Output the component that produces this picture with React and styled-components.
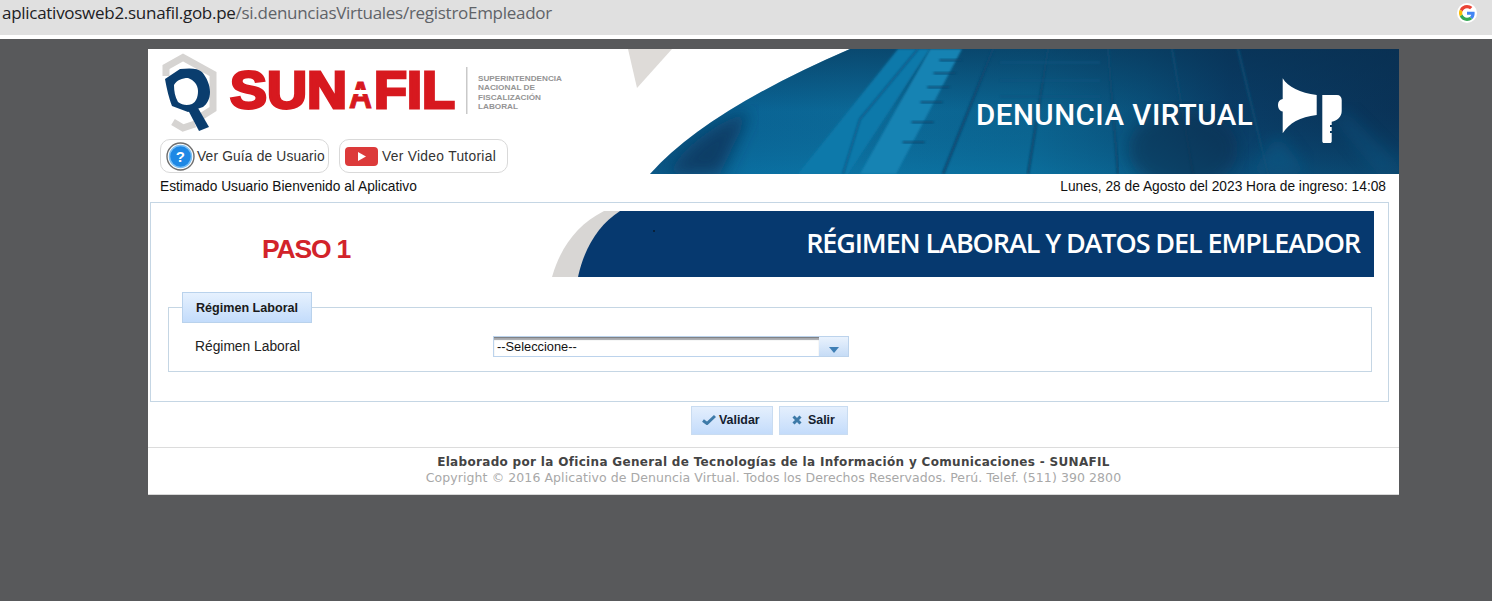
import React from "react";
import styled, { createGlobalStyle } from "styled-components";

const Global = createGlobalStyle`
  html, body { margin: 0; padding: 0; background: #58595b; }
  body { font-family: "Liberation Sans", Arial, sans-serif; overflow: hidden; }
  * { box-sizing: border-box; }
`;

const Screen = styled.div`
  width: 1492px;
  height: 601px;
  display: flex;
  flex-direction: column;
  overflow: hidden;
`;
const AddressBar = styled.div`
  height: 39px;
  flex: none;
  background: #e0e0e0;
  border-bottom: 4px solid #fff;
  padding: 0 15px 0 2px;
  display: flex;
  align-items: center;
  justify-content: space-between;
`;
const Url = styled.div`
  font-family: "Open Sans", sans-serif;
  font-size: 17px;
  letter-spacing: -0.28px;
  color: #202124;
  margin-top: -11px;
  white-space: nowrap;
`;
const UrlPath = styled.span`
  color: #5f6368;
`;
const GoogleBadge = styled.div`
  width: 20px;
  height: 20px;
  margin-top: -9px;
  border-radius: 50%;
  background: #fff;
  display: flex;
  align-items: center;
  justify-content: center;
`;
const Stage = styled.div`
  flex: 1;
  background: #58595b;
  padding: 10px 93px 0 148px;
`;
const Page = styled.div`
  width: 1251px;
  height: 446px;
  background: #fff;
  display: flex;
  flex-direction: column;
`;
const Header = styled.header`
  height: 125px;
  flex: none;
  display: flex;
  position: relative;
`;
const Brand = styled.div`
  width: 480px;
  flex: none;
  padding: 3px 0 0 12px;
  display: flex;
  flex-direction: column;
`;
const LinkRow = styled.div`
  display: flex;
  gap: 10px;
  margin-top: 5px;
`;
const LinkButton = styled.a`
  width: 169px;
  height: 34px;
  border: 1px solid #d9d9d9;
  border-radius: 10px;
  background: #fff;
  display: flex;
  align-items: center;
  gap: ${p => p.$gap}px;
  padding-left: ${p => p.$pad}px;
  font-size: 13.8px;
  letter-spacing: ${p => p.$track}px;
  color: #333;
  white-space: nowrap;
`;
const Banner = styled.div`
  flex: 1;
  position: relative;
  overflow: hidden;
`;
const BannerArt = styled.svg`
  display: block;
  width: 100%;
  height: 100%;
`;
const BannerTitle = styled.div`
  position: absolute;
  left: 348px;
  top: 51px;
  font-family: Roboto, sans-serif;
  font-size: 29.5px;
  line-height: 30px;
  font-weight: 500;
  letter-spacing: 0.5px;
  color: #fff;
  white-space: nowrap;
`;
const InfoRow = styled.div`
  height: 28px;
  flex: none;
  padding: 4px 13px 0 12px;
  display: flex;
  justify-content: space-between;
  font-size: 13.75px;
  line-height: 17px;
  color: #111;
`;
const Panel = styled.section`
  width: 1239px;
  height: 200px;
  margin-left: 2px;
  border: 1px solid #c5d6e4;
  padding: 8px 14px 0 17px;
  flex: none;
`;
const StepRow = styled.div`
  height: 66px;
  display: flex;
  position: relative;
`;
const StepLabel = styled.div`
  width: 384px;
  flex: none;
  padding: 23px 0 0 94px;
  font-size: 26.5px;
  font-weight: 700;
  letter-spacing: -1.2px;
  color: #d2232a;
`;
const StepBanner = styled.div`
  flex: 1;
  position: relative;
  overflow: hidden;
`;
const StepArt = styled.svg`
  display: block;
  width: 100%;
  height: 100%;
`;
const StepTitle = styled.div`
  position: absolute;
  right: 14px;
  top: 13px;
  font-family: "Open Sans", sans-serif;
  font-size: 27px;
  font-weight: 600;
  letter-spacing: -1.1px;
  color: #fff;
  white-space: nowrap;
`;
const Field = styled.div`
  margin-top: 30px;
  width: 1204px;
  height: 65px;
  border: 1px solid #c5d6e4;
  position: relative;
  padding: 28px 0 0 26px;
  display: flex;
  align-items: flex-start;
`;
const Legend = styled.div`
  position: absolute;
  left: 13px;
  top: -16px;
  width: 130px;
  height: 31px;
  border: 1px solid #b9d2ec;
  background: linear-gradient(#e6f1fe, #c3dcfb);
  display: flex;
  align-items: center;
  justify-content: center;
  font-size: 12.6px;
  font-weight: 700;
  color: #1a1a1a;
`;
const FieldLabel = styled.label`
  width: 298px;
  flex: none;
  margin-top: 1px;
  font-size: 13.8px;
  line-height: 20px;
  color: #222;
`;
const Select = styled.div`
  width: 356px;
  height: 21px;
  display: flex;
  border: 1px solid #bcd3ec;
`;
const SelectValue = styled.div`
  flex: 1;
  background: #fff;
  border-top: 1px solid #808286;
  box-shadow: inset 0 2px 1px #a6a8ac;
  padding: 2px 0 0 3px;
  font-size: 12.8px;
  line-height: 13px;
  color: #111;
`;
const SelectArrow = styled.div`
  width: 29px;
  flex: none;
  background: linear-gradient(#e9f2fd, #c6dcf6);
  display: flex;
  align-items: flex-end;
  justify-content: center;
  padding-bottom: 3px;
`;
const Actions = styled.div`
  height: 45px;
  flex: none;
  padding: 4px 0 0 543px;
  display: flex;
  gap: 6px;
`;
const ActionButton = styled.button`
  width: ${p => p.$w}px;
  height: 29px;
  border: 1px solid #c9dcf1;
  background: linear-gradient(#e4effd, #c4dcfb);
  padding: 0 0 2px ${p => p.$pad}px;
  display: flex;
  align-items: center;
  gap: ${p => p.$gap}px;
  font-family: "Liberation Sans", Arial, sans-serif;
  font-size: 12.4px;
  font-weight: 700;
  color: #14202e;
`;
const Footer = styled.footer`
  flex: 1;
  border-top: 1px solid #dcdcdc;
  border-bottom: 1px solid #d8d8d8;
  padding-top: 6px;
  text-align: center;
  font-family: "DejaVu Sans", Verdana, sans-serif;
  font-size: 12.5px;
  line-height: 16px;
`;
const FooterStrong = styled.div`
  font-weight: 700;
  font-size: 12px;
  letter-spacing: 0.32px;
  color: #444;
`;
const FooterMuted = styled.div`
  color: #a8a8a8;
  letter-spacing: 0.08px;
  font-size: 12.5px;
`;

const LOGO_FONT = "Liberation Sans, sans-serif";
const Logo = () => (
  <svg width="410" height="82" viewBox="0 0 410 82" role="img">
    <path d="M6 24 V15 L23 5.500 L53 22 V57 L42 64 M35 72 L23 76 L13 70" fill="none" stroke="#d6d4d2" strokeWidth="7" />
    <path fillRule="evenodd" fill="#0a3d6e" d="M5 27 L20 17 C30 16 38 16 42 20 C47 26 50 33 50 40 C50 47 47 52 43 55 L28 60 L12 54 C9 46 7 38 5 27 Z M14 33 C17 28 22 26 28 26 C34 28 38 33 38 39 C38 45 36 50 32 52 C27 54 22 53 18 50 C15 45 14 39 14 33 Z" />
    <path d="M28 58 L38 56 L49 75 L39 79 Z" fill="#0a3d6e" />
    <g fontFamily={LOGO_FONT} fontWeight="700" fill="#d7191f" stroke="#d7191f">
      <text x="70" y="56" fontSize="51" strokeWidth="2.800" textLength="117" lengthAdjust="spacingAndGlyphs">SUN</text>
      <text x="189" y="56" fontSize="36" strokeWidth="1" textLength="23" lengthAdjust="spacingAndGlyphs">A</text>
      <text x="214" y="56" fontSize="51" strokeWidth="2.800" textLength="81" lengthAdjust="spacingAndGlyphs">FIL</text>
    </g>
    <rect x="186" y="38" width="28" height="4" fill="#fff" />
    <rect x="306" y="15" width="1.500" height="47" fill="#c9c9c9" />
    <text fontFamily={LOGO_FONT} fontWeight="700" fontSize="8" fill="#949494">
      <tspan x="318" y="28.500" textLength="84" lengthAdjust="spacingAndGlyphs">SUPERINTENDENCIA</tspan>
      <tspan x="318" y="38" textLength="57" lengthAdjust="spacingAndGlyphs">NACIONAL DE</tspan>
      <tspan x="318" y="47.500" textLength="63" lengthAdjust="spacingAndGlyphs">FISCALIZACIÓN</tspan>
      <tspan x="318" y="57" textLength="40" lengthAdjust="spacingAndGlyphs">LABORAL</tspan>
    </text>
  </svg>
);

const HelpIcon = () => (
  <svg width="29" height="29" viewBox="0 0 29 29">
    <circle cx="14.500" cy="14.500" r="13.500" fill="#fff" stroke="#6e6e6e" strokeWidth="1.400" />
    <circle cx="14.500" cy="14.500" r="11" fill="#1e88e5" stroke="#7cc0f5" strokeWidth="1.500" />
    <text x="14.500" y="20" textAnchor="middle" fontFamily={LOGO_FONT} fontWeight="700" fontSize="15" fill="#fff">?</text>
  </svg>
);
const PlayIcon = () => (
  <svg width="33" height="19" viewBox="0 0 33 19">
    <rect width="33" height="19" rx="4" fill="#dc3a3a" />
    <path d="M13 5 L21 9.500 L13 14 Z" fill="#fff" />
  </svg>
);
const GoogleIcon = () => (
  <svg width="16" height="16" viewBox="0 0 48 48">
    <path fill="#EA4335" d="M24 9.500c3.500 0 6.700 1.200 9.200 3.600l6.900-6.900C35.900 2.400 30.500 0 24 0 14.600 0 6.500 5.400 2.600 13.200l8 6.200C12.400 13.700 17.700 9.500 24 9.500z" />
    <path fill="#4285F4" d="M46.900 24.500c0-1.600-.1-3.100-.4-4.500H24v9h12.900c-.6 3-2.200 5.500-4.700 7.200l7.700 6c4.500-4.200 7-10.300 7-17.700z" />
    <path fill="#FBBC05" d="M10.500 28.600A14.500 14.500 0 0 1 10.500 19.400l-8-6.200A24 24 0 0 0 2.600 34.800l7.900-6.200z" />
    <path fill="#34A853" d="M24 48c6.500 0 11.900-2.100 15.900-5.800l-7.700-6c-2.200 1.400-4.900 2.300-8.200 2.300-6.300 0-11.600-4.200-13.500-9.900l-8 6.200C6.500 42.600 14.600 48 24 48z" />
  </svg>
);
const Check = () => (
  <svg width="14" height="11" viewBox="0 0 14 11">
    <path d="M1 6.500 L5 9.500 L13 2" fill="none" stroke="#3d7aa8" strokeWidth="3" />
  </svg>
);
const Cross = () => (
  <svg width="10" height="10" viewBox="0 0 10 10">
    <path d="M1.500 1.500 L8.500 8.500 M8.500 1.500 L1.500 8.500" fill="none" stroke="#3d7aa8" strokeWidth="3" />
  </svg>
);

const columnLines = [
  [365, 315], [420, 400], [480, 490], [544, 565], [610, 640],
];
const keyRows = [10, 23, 37, 52, 72, 92];
const firstColumnX = y => 338 - y * 0.45;

const BannerDrawing = () => (
  <BannerArt viewBox="0 0 771 125" preserveAspectRatio="none">
    <defs>
      <linearGradient id="kb" x1="0" x2="1" y1="0" y2="0">
        <stop offset="0.03" stopColor="#0a4a78" />
        <stop offset="0.16" stopColor="#0a6a9c" />
        <stop offset="0.3" stopColor="#0c6f9f" />
        <stop offset="0.52" stopColor="#0b6996" />
        <stop offset="0.67" stopColor="#0a5580" />
        <stop offset="0.78" stopColor="#0a3e68" />
        <stop offset="1" stopColor="#0a3358" />
      </linearGradient>
      <linearGradient id="topShade" x1="0" x2="0" y1="0" y2="1">
        <stop offset="0" stopColor="#082f50" stopOpacity=".6" />
        <stop offset="0.5" stopColor="#082f50" stopOpacity=".1" />
        <stop offset="1" stopColor="#0c7fb0" stopOpacity=".25" />
      </linearGradient>
      <filter id="soft"><feGaussianBlur stdDeviation="1" /></filter>
      <filter id="wide"><feGaussianBlur stdDeviation="8" /></filter>
      <clipPath id="swoosh"><path d="M222 0 Q78 62 22 125 H771 V0 Z" /></clipPath>
    </defs>
    <path d="M0 0 H44 L9 39 Z" fill="#dedbd8" />
    <g clipPath="url(#swoosh)">
      <rect width="771" height="125" fill="url(#kb)" />
      <rect width="771" height="125" fill="url(#topShade)" />
      <path d="M270 0 L302 0 L220 125 L170 125 Z" fill="#0e79aa" filter="url(#soft)" />
      <path d="M302 0 H334 L268 125 H232 Z" fill="#1583b3" filter="url(#soft)" />
      <path d="M290 0 L232 70 L215 125" stroke="#0b5c8a" strokeWidth="2" fill="none" filter="url(#soft)" />
      <path d="M38 125 C60 95 85 75 122 62 L92 125 Z" fill="#0a3d66" filter="url(#wide)" />
      {columnLines.map(([a, b]) => (
        <path key={a} d={`M${a} 0 L${b} 125`} stroke="#0a4870" strokeWidth="2.500" filter="url(#soft)" />
      ))}
      {keyRows.map(y => (
        <rect key={y} x={firstColumnX(y) - 22} y={y} width="22" height="2.500" fill="#0a4870" opacity=".8" filter="url(#soft)" />
      ))}
      {[12, 30, 46].map(y => (
        <rect key={y} x="372" y={y} width="100" height="3" fill="#0a5480" opacity=".55" filter="url(#soft)" />
      ))}
      <ellipse cx="555" cy="100" rx="55" ry="40" fill="#082a48" opacity=".5" filter="url(#wide)" />
      <path d="M622 125 L650 85 L680 125 Z" fill="#0b5a86" opacity=".6" filter="url(#wide)" />
      <path d="M715 60 L771 115 V125 H750 L705 70 Z" fill="#0b5a86" opacity=".4" filter="url(#wide)" />
    </g>
    <path fill="#fff" d="M654.700 29.300 C660 38 672 44 688.700 46 V66 C672 68 661 74 654.700 84.300 V62.500 C651.500 62 650 59 650 56 C650 53 651.500 50.500 654.700 50 Z" />
    <path fill="#fff" d="M694.300 46 H709 C712 46 713.700 48 713.700 51 V62 C713.700 68 709 72 703.700 72.700 V76 H702 V78 H703.700 V82 H702 V84 H703.700 V92 C703.700 93.500 703 94 702 94 H696 C695 94 694.300 93.500 694.300 92 Z" />
  </BannerArt>
);

export default function App() {
  return (
    <Screen>
      <Global />
      <AddressBar>
        <Url>aplicativosweb2.sunafil.gob.pe<UrlPath>/si.denunciasVirtuales/registroEmpleador</UrlPath></Url>
        <GoogleBadge><GoogleIcon /></GoogleBadge>
      </AddressBar>
      <Stage>
        <Page>
          <Header>
            <Brand>
              <Logo />
              <LinkRow>
                <LinkButton $gap={2} $pad={5} $track={0.15}><HelpIcon />Ver Guía de Usuario</LinkButton>
                <LinkButton $gap={4} $pad={5} $track={0.3}><PlayIcon />Ver Video Tutorial</LinkButton>
              </LinkRow>
            </Brand>
            <Banner>
              <BannerDrawing />
              <BannerTitle>DENUNCIA VIRTUAL</BannerTitle>
            </Banner>
          </Header>
          <InfoRow>
            <span>Estimado Usuario Bienvenido al Aplicativo</span>
            <span>Lunes, 28 de Agosto del 2023 Hora de ingreso: 14:08</span>
          </InfoRow>
          <Panel>
            <StepRow>
              <StepLabel>PASO 1</StepLabel>
              <StepBanner>
                <StepArt viewBox="0 0 822 66" preserveAspectRatio="none">
                  <path d="M0 66 C8 38 24 14 52 0 H822 V66 Z" fill="#d8d6d4" />
                  <path d="M26 66 C32 38 46 14 68 0 H822 V66 Z" fill="#06396f" />
                  <circle cx="102" cy="20" r="1" fill="#0a1a2a" />
                </StepArt>
                <StepTitle>RÉGIMEN LABORAL Y DATOS DEL EMPLEADOR</StepTitle>
              </StepBanner>
            </StepRow>
            <Field>
              <Legend>Régimen Laboral</Legend>
              <FieldLabel>Régimen Laboral</FieldLabel>
              <Select>
                <SelectValue>--Seleccione--</SelectValue>
                <SelectArrow>
                  <svg width="10" height="6" viewBox="0 0 10 6"><path d="M0 0 H10 L5 6 Z" fill="#3f7fb5" /></svg>
                </SelectArrow>
              </Select>
            </Field>
          </Panel>
          <Actions>
            <ActionButton $w={82} $pad={10} $gap={3}><Check />Validar</ActionButton>
            <ActionButton $w={69} $pad={12} $gap={6}><Cross />Salir</ActionButton>
          </Actions>
          <Footer>
            <FooterStrong>Elaborado por la Oficina General de Tecnologías de la Información y Comunicaciones - SUNAFIL</FooterStrong>
            <FooterMuted>Copyright © 2016 Aplicativo de Denuncia Virtual. Todos los Derechos Reservados. Perú. Telef. (511) 390 2800</FooterMuted>
          </Footer>
        </Page>
      </Stage>
    </Screen>
  );
}
